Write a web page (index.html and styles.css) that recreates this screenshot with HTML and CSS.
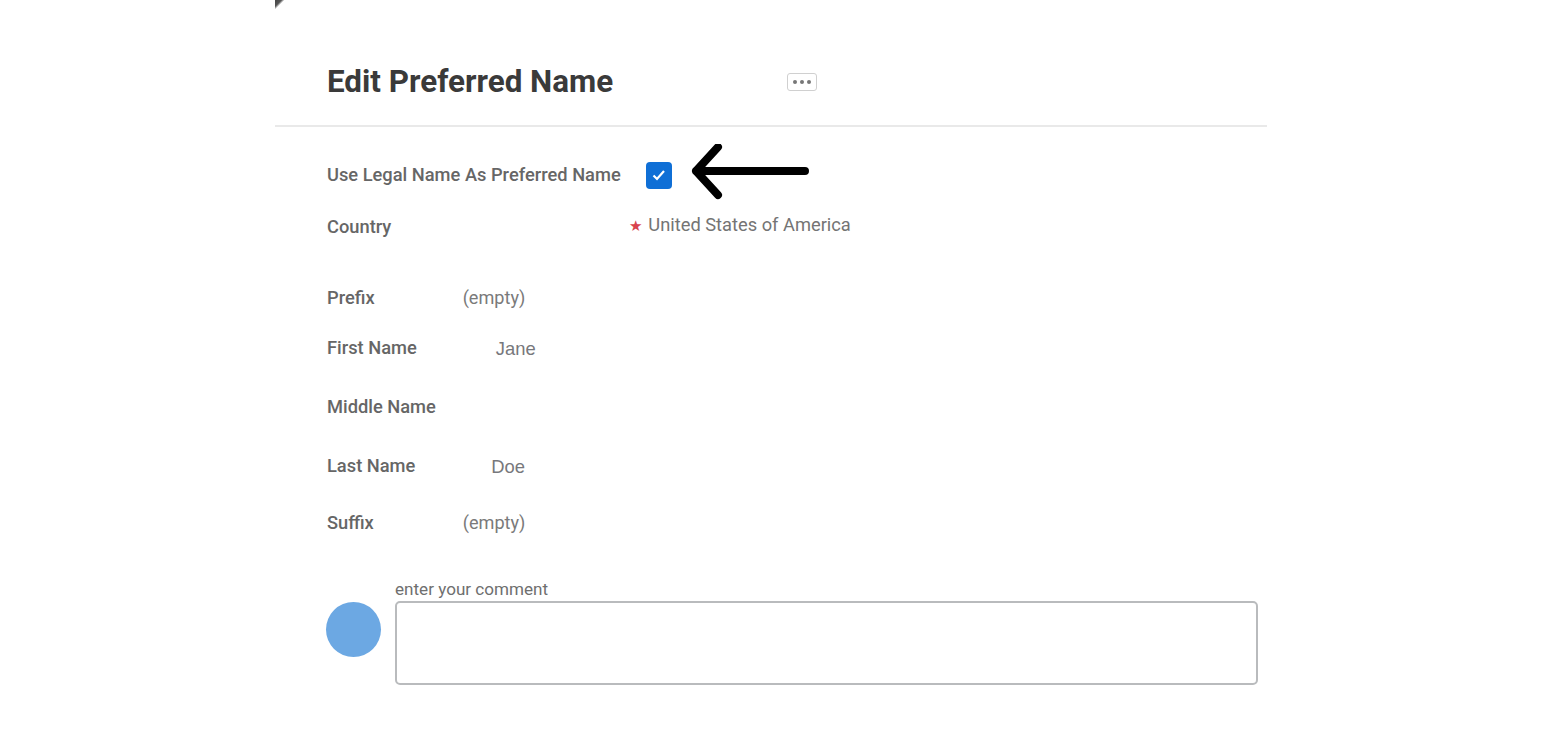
FILE: index.html
```html
<!DOCTYPE html>
<html lang="en">
<head>
<meta charset="utf-8">
<title>Edit Preferred Name</title>
<link rel="stylesheet" href="styles.css">
</head>
<body>
<main class="page">
  <span class="corner"></span>
  <header class="head">
    <h1 class="title">Edit Preferred Name</h1>
    <button class="more" type="button" aria-label="More"><i></i><i></i><i></i></button>
  </header>
  <section class="form">
    <div class="row row-legal">
      <span class="label">Use Legal Name As Preferred Name</span>
      <span class="check">
        <svg width="16" height="14" viewBox="0 0 16 14"><path d="M2.5 7.5 6 11 13 3" fill="none" stroke="#fff" stroke-width="2.2"/></svg>
      </span>
      <svg class="arrow" width="120" height="56" viewBox="0 0 120 56"><path d="M115 27H6M28 3 6 27l22 24" fill="none" stroke="#000" stroke-width="8" stroke-linecap="round" stroke-linejoin="round"/></svg>
    </div>
    <div class="row row-country">
      <span class="label label-country">Country</span>
      <span class="star">★</span>
      <span class="value">United States of America</span>
    </div>
    <div class="row row-prefix">
      <span class="label">Prefix</span>
      <span class="empty">(empty)</span>
    </div>
    <div class="row row-first">
      <span class="label">First Name</span>
      <span class="plain">Jane</span>
    </div>
    <div class="row row-middle">
      <span class="label">Middle Name</span>
    </div>
    <div class="row row-last">
      <span class="label">Last Name</span>
      <span class="plain">Doe</span>
    </div>
    <div class="row row-suffix">
      <span class="label">Suffix</span>
      <span class="empty">(empty)</span>
    </div>
  </section>
  <section class="comment">
    <span class="avatar"></span>
    <div class="comment-main">
      <label class="comment-label" for="c">enter your comment</label>
      <textarea class="comment-box" id="c"></textarea>
    </div>
  </section>
</main>
</body>
</html>
```
FILE: styles.css
```css
* { box-sizing: border-box; }
html, body { margin: 0; height: 100%; background: #fff; overflow: hidden; }
body { font-family: Roboto, "Liberation Sans", sans-serif; }

.page {
  position: relative;
  width: 992px;
  margin-left: 275px;
}
.corner {
  position: absolute;
  left: 0;
  top: 0;
  width: 9px;
  height: 10px;
  background: linear-gradient(135deg, #444 0%, #555 35%, rgba(255,255,255,0) 52%);
}

.head {
  display: flex;
  align-items: center;
  height: 127px;
  padding: 38px 0 0 52px;
  border-bottom: 2px solid #e9e9e9;
}
.title {
  margin: 0;
  width: 460px;
  font-size: 31.4px;
  font-weight: 700;
  color: #3a3a3a;
  line-height: 36px;
}
.more {
  display: flex;
  align-items: center;
  justify-content: center;
  gap: 3px;
  width: 30px;
  height: 18px;
  padding: 0;
  background: #fff;
  border: 1px solid #d0d0d0;
  border-radius: 3px;
}
.more i { width: 4px; height: 4px; border-radius: 50%; background: #777; }

.form { padding-left: 52px; }
.row { display: flex; align-items: center; height: 24px; }
.label { font-size: 18.3px; font-weight: 500; color: #666; white-space: nowrap; margin-top: -1px; }
.label-country { margin-top: 1px; }

.row-legal { margin-top: 36px; position: relative; }
.check {
  display: flex;
  align-items: center;
  justify-content: center;
  width: 26px;
  height: 27px;
  margin-left: 25px;
  background: #0f6fd6;
  border-radius: 4px;
}
.arrow { margin-left: 18px; margin-top: -7px; }

.row-country { margin-top: 27px; }
.star { margin-left: 238px; font-size: 15px; color: #d9434e; }
.value { margin-left: 6px; font-size: 18.3px; color: #747474; margin-top: -3px; }

.row-prefix { margin-top: 48px; }
.row-first { margin-top: 26px; }
.row-middle { margin-top: 35px; }
.row-last { margin-top: 35px; }
.row-suffix { margin-top: 33px; }

.empty { font-size: 18.1px; color: #7a7a7a; margin-top: -2px; }
.row-prefix .empty { margin-left: 88px; }
.row-suffix .empty { margin-left: 89px; }
.plain { font-family: "Liberation Sans", Arial, sans-serif; font-size: 18.4px; color: #77787c; margin-top: 2px; }
.row-first .plain { margin-left: 79px; }
.row-last .plain { margin-left: 76px; }

.comment {
  display: flex;
  align-items: flex-end;
  gap: 14px;
  margin-top: 44px;
  padding-left: 51px;
}
.avatar {
  width: 55px;
  height: 55px;
  margin-bottom: 28px;
  border-radius: 50%;
  background: #6ca8e3;
  flex: none;
}
.comment-main { display: flex; flex-direction: column; width: 863px; }
.comment-label { font-size: 17.1px; color: #6f6f6f; line-height: 20px; margin-bottom: 2px; }
.comment-box {
  display: block;
  width: 863px;
  height: 84px;
  border: 2px solid #b9bbbd;
  border-radius: 5px;
  background: #fff;
  resize: none;
}
```
